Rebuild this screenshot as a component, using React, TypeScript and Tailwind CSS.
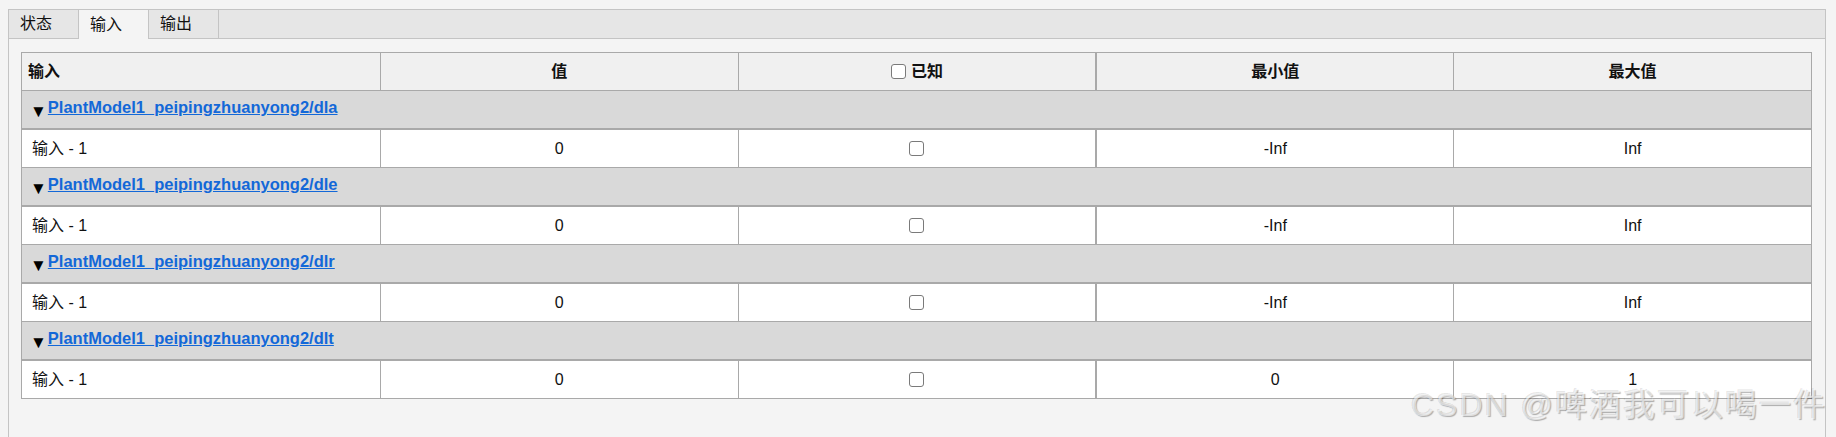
import React from "react";

type Group = {
  path: string;
  value: string;
  min: string;
  max: string;
};

const GROUPS: Group[] = [
  { path: "PlantModel1_peipingzhuanyong2/dla", value: "0", min: "-Inf", max: "Inf" },
  { path: "PlantModel1_peipingzhuanyong2/dle", value: "0", min: "-Inf", max: "Inf" },
  { path: "PlantModel1_peipingzhuanyong2/dlr", value: "0", min: "-Inf", max: "Inf" },
  { path: "PlantModel1_peipingzhuanyong2/dlt", value: "0", min: "0", max: "1" },
];

const TABS = ["状态", "输入", "输出"];

function Box() {
  return (
    <span className="inline-block w-[15px] h-[15px] rounded-[3px] border border-[#7a7a7a] bg-white" />
  );
}

// 表格单元格，除第一列外带左边框
function Cell({
  col,
  children,
  className = "",
}: {
  col: number;
  children?: React.ReactNode;
  className?: string;
}) {
  const edge =
    col === 0 ? "" : col === 3 ? "border-l-2 border-[#a9a9a9]" : "border-l border-[#a9a9a9]";
  return <div className={`flex items-center ${edge} ${className}`}>{children}</div>;
}

export default function App() {
  return (
    <div
      className="relative w-[1836px] h-[437px] overflow-hidden bg-[#f4f4f4] pt-[9px] pl-[8px] text-[16px] text-[#111]"
      style={{ fontFamily: '"Liberation Sans", "Noto Sans CJK SC", sans-serif' }}
    >
      <div className="w-[1818px] h-[428px] border border-b-0 border-[#c4c4c4] bg-[#f4f4f4]">
        {/* 标签页 */}
        <div className="flex h-[29px] border-b border-[#c4c4c4] bg-[#e6e6e6]">
          {TABS.map((t) => (
            <div
              key={t}
              className={`flex items-center w-[70px] pl-[11px] border-r border-[#c4c4c4] ${
                t === "输入" ? "relative -mb-px h-[29px] bg-[#f4f4f4]" : ""
              }`}
            >
              {t}
            </div>
          ))}
        </div>

        {/* 表格 */}
        <div className="ml-[12px] mt-[13px] w-[1791px] border border-b-0 border-[#a9a9a9]">
          <div className="grid grid-cols-5 h-[38px] border-b border-[#a9a9a9] bg-[#f0f0f0] font-bold">
            <Cell col={0} className="pl-[6px]">输入</Cell>
            <Cell col={1} className="justify-center">值</Cell>
            <Cell col={2} className="justify-center gap-[5px]">
              <Box />
              已知
            </Cell>
            <Cell col={3} className="justify-center">最小值</Cell>
            <Cell col={4} className="justify-center">最大值</Cell>
          </div>

          {GROUPS.map((g) => (
            <div key={g.path}>
              <div className="flex items-center h-[39px] pl-[8px] pb-[4px] border-b-2 border-[#a9a9a9] bg-[#d9d9d9]">
                <span className="text-[17px] mt-[7px] mr-px leading-none text-black">▼</span>
                <a className="font-bold text-[16.5px] text-[#1368d8] underline" href="#">
                  {g.path}
                </a>
              </div>
              <div className="grid grid-cols-5 h-[38px] border-b border-[#a9a9a9] bg-white">
                <Cell col={0} className="pl-[10px]">输入 - 1</Cell>
                <Cell col={1} className="justify-center">{g.value}</Cell>
                <Cell col={2} className="justify-center">
                  <Box />
                </Cell>
                <Cell col={3} className="justify-center">{g.min}</Cell>
                <Cell col={4} className="justify-center">{g.max}</Cell>
              </div>
            </div>
          ))}
        </div>
      </div>

      {/* 水印 */}
      <div className="absolute left-[1411px] top-[389px] text-[32px] tracking-[2px] leading-none whitespace-nowrap text-[rgba(255,255,255,0.6)] [text-shadow:1px_1px_1px_rgba(0,0,0,0.3),-1px_-1px_0_rgba(0,0,0,0.1)]">
        CSDN @啤酒我可以喝一件
      </div>
    </div>
  );
}
